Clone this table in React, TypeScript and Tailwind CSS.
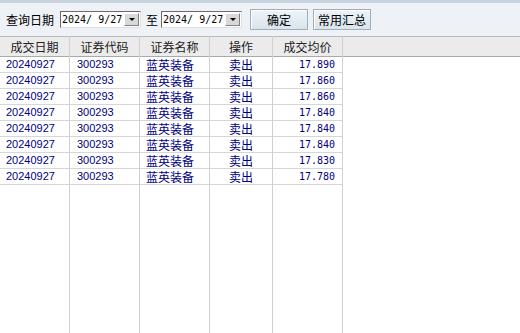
import React from "react";

const rows = [
  { date: "20240927", code: "300293", name: "蓝英装备", op: "卖出", price: "17.890" },
  { date: "20240927", code: "300293", name: "蓝英装备", op: "卖出", price: "17.860" },
  { date: "20240927", code: "300293", name: "蓝英装备", op: "卖出", price: "17.860" },
  { date: "20240927", code: "300293", name: "蓝英装备", op: "卖出", price: "17.840" },
  { date: "20240927", code: "300293", name: "蓝英装备", op: "卖出", price: "17.840" },
  { date: "20240927", code: "300293", name: "蓝英装备", op: "卖出", price: "17.840" },
  { date: "20240927", code: "300293", name: "蓝英装备", op: "卖出", price: "17.830" },
  { date: "20240927", code: "300293", name: "蓝英装备", op: "卖出", price: "17.780" },
];

const cjk = "font-['Noto_Sans_CJK_SC',sans-serif]";
const mono = "font-['DejaVu_Sans_Mono',monospace]";
const sans = "font-['Liberation_Sans','Noto_Sans_CJK_SC',sans-serif]";

type Row = (typeof rows)[number];

const columns: {
  title: string;
  width: string;
  cell: (r: Row) => React.ReactNode;
  cellClass: string;
}[] = [
  { title: "成交日期", width: "w-[70px]", cell: (r) => r.date, cellClass: `pl-[6px] text-[11px] ${sans}` },
  { title: "证券代码", width: "w-[70px]", cell: (r) => r.code, cellClass: `pl-[7px] text-[11px] ${sans}` },
  { title: "证券名称", width: "w-[70px]", cell: (r) => r.name, cellClass: `pl-[6px] text-[12px] ${cjk}` },
  { title: "操作", width: "w-[63px]", cell: (r) => r.op, cellClass: `justify-center text-[12px] ${cjk}` },
  { title: "成交均价", width: "w-[70px]", cell: (r) => r.price, cellClass: `justify-end pr-[7px] text-[10px] ${mono}` },
];

function DateSelect({ value }: { value: string }) {
  return (
    <div className="flex h-[17px] w-[81px] border border-t-[#6b6b6b] border-l-[#6b6b6b] border-b-[#e0e0e0] border-r-[#e0e0e0] bg-white">
      <div className={`flex flex-1 items-center pl-[1px] text-[10px] leading-none text-black ${mono}`}>
        {value}
      </div>
      <div className="m-[1px] flex w-[15px] items-center justify-center border border-t-white border-l-white border-b-[#808080] border-r-[#808080] bg-[#d8d8d8]">
        <div className="h-0 w-0 border-x-[3px] border-t-[3px] border-x-transparent border-t-black" />
      </div>
    </div>
  );
}

function Btn({ label, w }: { label: string; w: string }) {
  return (
    <div
      className={`flex h-[21px] ${w} items-center justify-center border border-[#a3adb6] bg-gradient-to-b from-[#eef4f8] to-[#d9e4ec] shadow-[inset_1px_1px_0_#ffffff] text-[12px] text-black ${cjk}`}
    >
      {label}
    </div>
  );
}

export default function App() {
  return (
    <div className="flex h-[333px] w-[520px] flex-col overflow-hidden bg-white">
      <div className="h-[3px] bg-[#c7d3df]" />
      <div className="flex h-[33px] items-center bg-[#eef2f6] pl-[6px]">
        <span className={`text-[12px] text-black ${cjk}`}>查询日期</span>
        <div className="ml-[6px]">
          <DateSelect value="2024/ 9/27" />
        </div>
        <span className={`ml-[5px] text-[12px] text-black ${cjk}`}>至</span>
        <div className="ml-[3px]">
          <DateSelect value="2024/ 9/27" />
        </div>
        <div className="ml-[8px]">
          <Btn label="确定" w="w-[58px]" />
        </div>
        <div className="ml-[5px]">
          <Btn label="常用汇总" w="w-[58px]" />
        </div>
      </div>
      <div className="flex flex-1">
        {columns.map((c) => (
          <div key={c.title} className={`flex ${c.width} flex-col border-r border-[#cfcfcf]`}>
            <div
              className={`flex h-[21px] items-center justify-center border-y border-t-[#b9b9b9] border-b-[#a9a9a9] bg-[#ebebeb] text-[12px] text-[#222] ${cjk}`}
            >
              {c.title}
            </div>
            {rows.map((r, i) => (
              <div
                key={i}
                className={`flex h-[16px] items-center border-b border-[#d6d6d6] leading-none text-[#000080] ${c.cellClass}`}
              >
                {c.cell(r)}
              </div>
            ))}
          </div>
        ))}
        <div className="flex flex-1 flex-col">
          <div className="h-[21px] border-y border-t-[#b9b9b9] border-b-[#a9a9a9] bg-[#ebebeb]" />
        </div>
      </div>
    </div>
  );
}
